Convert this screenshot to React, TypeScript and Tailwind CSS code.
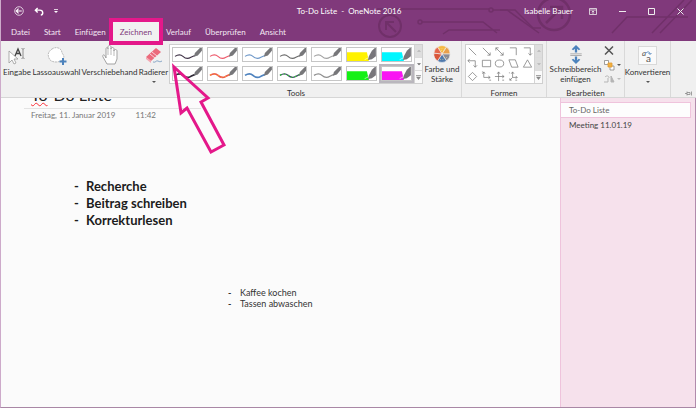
import { useState } from "react"
import type { ReactNode } from "react"
import clsx from "clsx"

const tabs = ["Datei", "Start", "Einfügen", "Zeichnen", "Verlauf", "Überprüfen", "Ansicht"]

interface Pen {
  label: string
  color: string
  width?: number
  marker?: boolean
  glitter?: string
}

const pens: Pen[] = [
  { label: "Stift schwarz", color: "#3f3347" },
  { label: "Stift rot", color: "#ee5a6c" },
  { label: "Stift blau", color: "#6d97c8" },
  { label: "Stift dunkelgrau", color: "#6b6b6b" },
  { label: "Stift grau", color: "#a2a2a2" },
  { label: "Textmarker gelb", color: "#fff200", marker: true },
  { label: "Textmarker türkis", color: "#00f6ff", marker: true },
  { label: "Stift schwarz dick", color: "#2e2936", width: 1.7 },
  { label: "Stift rot dick", color: "#ed5a50", width: 1.7, glitter: "#f79a3c" },
  { label: "Stift blau dick", color: "#4f83bf", width: 1.7 },
  { label: "Stift Galaxie", color: "#44506b", width: 1.5, glitter: "#2fd02f" },
  { label: "Stift grau dick", color: "#8e8e8e", width: 1.4 },
  { label: "Textmarker grün", color: "#15f015", marker: true },
  { label: "Textmarker magenta", color: "#f914f3", marker: true },
]

const shapes: { label: string; draw: ReactNode }[] = [
  { label: "Linie", draw: <path d="M2 2l8 8" /> },
  { label: "Pfeil", draw: <path d="M2 2l8 8M10 7v3H7" /> },
  { label: "Doppelpfeil", draw: <path d="M2 2l8 8M10 7v3H7M2 5V2h3" /> },
  { label: "Winkel", draw: <path d="M2 2h7v8" /> },
  { label: "Winkelpfeil", draw: <path d="M2 2h7v8M7 8l2 2 2-2" /> },
  { label: "Winkel-Doppelpfeil", draw: <path d="M1 3h8v7M7 8l2 2 2-2M3 1L1 3l2 2" /> },
  { label: "Rechteck", draw: <path d="M1.500 2.500h9v7h-9z" /> },
  { label: "Ellipse", draw: <ellipse cx="6" cy="6" rx="4.6" ry="3.8" /> },
  { label: "Parallelogramm", draw: <path d="M1 2h7l3 8H4z" /> },
  { label: "Dreieck", draw: <path d="M6 2l4.500 8h-9z" /> },
  { label: "Raute", draw: <path d="M6 1.500L10.500 6 6 10.500 1.500 6z" /> },
  { label: "Koordinatensystem", draw: <path d="M3 1v6h7M1.500 3L3 1l1.500 2M8 5.500L10 7 8 8.500M1 1h1M9 10h2" /> },
  { label: "Achsenkreuz", draw: <path d="M5 1v10M1 6h10M3.500 3L5 1l1.500 2M9 4.500L11 6 9 7.500M9 10h2" /> },
  { label: "3D-Achsen", draw: <path d="M5 1v6h5M5 7l-3 3M3.500 3L5 1l1.500 2M8.500 5.500L10 7 8.500 8.500M2 8v2h2M1 2h1M8 10h2" /> },
]

function PenIcon({ pen }: { pen: Pen }) {
  return (
    <svg viewBox="0 0 29 14" className="block h-full w-full" preserveAspectRatio="none">
      {pen.marker ? (
        <>
          <path d="M0 4.500h20l2 9.500H0z" fill={pen.color} />
          <path d="M18 13l1-2 1 1 1-2 1 2 2-1" stroke="#fff" strokeWidth=".8" strokeDasharray="1 1" fill="none" />
          <path d="M28 0h1v9l-4 3-4 1 1-4 3-6z" fill="#77757a" />
        </>
      ) : (
        <>
          <path d="M2 9c3-2 6-2 8 0s5 3 8 1l4-2" stroke={pen.color} strokeWidth={pen.width ?? 1.1} fill="none" />
          {pen.glitter && (
            <path d="M2 9c3-2 6-2 8 0s5 3 8 1l4-2" stroke={pen.glitter} strokeWidth="1.200" strokeDasharray="1.500 2.500" fill="none" />
          )}
          <path d="M27 0h2v3l-4 5-4 1.500 1-4z" fill="#77777a" />
        </>
      )}
    </svg>
  )
}

function Scroller({ mutedDown = false }: { mutedDown?: boolean }) {
  return (
    <div className="flex w-2 flex-col border-l border-[#d4d4d4] text-[#777]">
      <button aria-label="Nach oben" className="flex flex-1 items-center justify-center bg-[#dedede]">
        <svg viewBox="0 0 6 6" className="h-1 w-1" fill="#b5b5b5"><path d="M0 4l3-3 3 3z" /></svg>
      </button>
      <button
        aria-label="Nach unten"
        className={clsx("flex flex-1 items-center justify-center border-y border-[#dcdcdc]", mutedDown ? "bg-[#dedede]" : "bg-[#fafafa]")}
      >
        <svg viewBox="0 0 6 6" className="h-1 w-1" fill={mutedDown ? "#b5b5b5" : "#666"}><path d="M0 2h6L3 5z" /></svg>
      </button>
      <button aria-label="Mehr" className="flex flex-1 items-center justify-center bg-[#fafafa]">
        <svg viewBox="0 0 6 6" className="h-[5px] w-[5px]" fill="#888"><path d="M0 0h6v1H0zM0 2h6L3 6z" /></svg>
      </button>
    </div>
  )
}

function RibbonButton({ label, icon, arrow, className }: { label: ReactNode; icon: ReactNode; arrow?: boolean; className?: string }) {
  return (
    <button className={clsx("flex flex-col items-center whitespace-nowrap text-[8px] leading-[10px] text-[#333]", className)}>
      <span className="flex h-[23px] items-center justify-center">{icon}</span>
      <span>{label}</span>
      {arrow && <Caret />}
    </button>
  )
}

function Caret() {
  return <svg viewBox="0 0 4 2" className="mt-1 h-[2px] w-1" fill="#555"><path d="M0 0h4L2 2z" /></svg>
}

function Group({ label, children, className }: { label?: string; children: ReactNode; className?: string }) {
  return (
    <section className={clsx("flex flex-col pt-[3px]", className)}>
      <div className="flex h-10 shrink-0 justify-center">{children}</div>
      {label && <div className="pt-1 text-center text-[8px] leading-[10px] text-[#333]">{label}</div>}
    </section>
  )
}

function CircuitArt() {
  return (
    <svg className="absolute right-0 top-0 h-[41px] w-[320px]" viewBox="376 0 320 41" fill="none" stroke="#703069" strokeWidth="1.500">
      <circle cx="390" cy="26" r="11" strokeWidth="2" />
      <path d="M396 32l-9-9M386 30v-8h8" strokeWidth="2" />
      <path d="M377 9h112M493 10h22l18 18h8" />
      <circle cx="491" cy="10" r="2" />
      <circle cx="420" cy="22" r="2" />
      <path d="M422 22h61l14 11M443 34l6-4h51M500 10h7l32 23" />
      <circle cx="554" cy="14" r="16" strokeWidth="2.500" />
      <path d="M546 23l15-15M550 7h12v12" strokeWidth="2.500" />
      <path d="M612 33l15-16h61M652 33L684 0M660 33L692 0" />
    </svg>
  )
}

function Header({ active, onSelect }: { active: string; onSelect: (tab: string) => void }) {
  return (
    <header className="relative z-20 bg-[#80397b] text-white">
      <CircuitArt />
      <div className="relative flex h-[22px] items-center text-[8px]">
        <div className="flex flex-1 items-center gap-3 pl-[13px]">
          <button aria-label="Zurück">
            <svg viewBox="0 0 11 11" className="h-[10px] w-[10px]" fill="none" stroke="#fff">
              <circle cx="5.500" cy="5.500" r="4.700" strokeWidth=".8" />
              <path d="M8.500 5.500h-6M5 3L2.500 5.500 5 8" strokeWidth="1.200" />
            </svg>
          </button>
          <button aria-label="Rückgängig" className="-ml-1 px-[2px]">
            <svg viewBox="0 0 11 10" className="h-[9px] w-[10px]" fill="none" stroke="#fff" strokeWidth="1.600">
              <path d="M4 1L1.500 3.500 4 6M2 3.500h4.500c4 0 4 5 1 5.500" />
            </svg>
          </button>
          <button aria-label="Symbolleiste anpassen" className="-ml-1">
            <svg viewBox="0 0 4 4" className="h-1 w-1" fill="#fff"><path d="M0 0h4v.8H0zM0 2h4L2 4z" /></svg>
          </button>
        </div>
        <h1 className="whitespace-nowrap">To-Do Liste&nbsp; -&nbsp; OneNote 2016</h1>
        <div className="flex flex-1 items-center justify-end pr-3">
          <span className="mr-4 whitespace-nowrap">Isabelle Bauer</span>
          <div className="flex items-center gap-[22px]">
            <button aria-label="Menüband-Optionen">
              <svg viewBox="0 0 8 7" className="h-[7px] w-2" fill="none" stroke="#eee" strokeWidth=".8">
                <path d="M.5.5h7v6h-7zM.5 2h7M4 6V3M2.800 4.200L4 3l1.200 1.200" />
              </svg>
            </button>
            <button aria-label="Minimieren">
              <svg viewBox="0 0 7 7" className="h-[7px] w-[7px]" stroke="#eee"><path d="M0 3.500h7" /></svg>
            </button>
            <button aria-label="Maximieren">
              <svg viewBox="0 0 7 7" className="h-[7px] w-[7px]" fill="none" stroke="#eee"><path d="M.5.5h6v6h-6z" /></svg>
            </button>
            <button aria-label="Schließen">
              <svg viewBox="0 0 7 7" className="h-[7px] w-[7px]" stroke="#eee"><path d="M.5.5l6 6M6.500.5l-6 6" /></svg>
            </button>
          </div>
        </div>
      </div>
      <nav className="relative flex h-[19px] items-stretch pl-[3px] text-[8px]">
        {tabs.map((tab) => (
          <button
            key={tab}
            onClick={() => onSelect(tab)}
            className={clsx(
              "relative px-[7px]",
              tab === active ? "bg-[#f1f1f1] text-[#80397b]" : "text-[#f3e8f2]"
            )}
          >
            {tab}
            {tab === "Zeichnen" && (
              <span className="pointer-events-none absolute -inset-x-1 -bottom-1 -top-1 z-10 border-4 border-[#e4188a]" />
            )}
          </button>
        ))}
      </nav>
    </header>
  )
}

function Ribbon() {
  const [selected, setSelected] = useState("Textmarker magenta")

  return (
    <div className="relative z-10 flex h-[57px] border-b border-[#d6d6d6] bg-[#f0f0f0]">
      <Group className="pl-[1px]">
        <RibbonButton
          className="w-[30px]"
          label="Eingabe"
          icon={
            <svg viewBox="0 0 18 18" className="h-[18px] w-[18px]">
              <path d="M1 4v12l3-3 2 4 2-1-2-4h4z" fill="#fff" stroke="#999" strokeWidth=".8" />
              <path d="M7 9l3-7 3 7M8 6.500h4" fill="none" stroke="#444" strokeWidth="1.300" />
              <path d="M13.500 1.500c1 0 1 .5 1.500.5s.5-.5 1.500-.5M15 2v9M13.500 11.500c1 0 1-.5 1.500-.5s.5.5 1.500.5" fill="none" stroke="#777" strokeWidth=".8" />
            </svg>
          }
        />
        <RibbonButton
          className="w-[49px]"
          label="Lassoauswahl"
          icon={
            <svg viewBox="0 0 20 20" className="h-5 w-5">
              <path d="M5 3c4-3 10-1 10 4 3 3 2 7-1 8-5 2-11 1-12-3C0 8 2 5 5 3z" fill="#fff" stroke="#aaa" strokeWidth=".8" strokeDasharray="2 .7" />
              <path d="M16 12v7M12.500 15.500h7" stroke="#4c82bc" strokeWidth="2" />
            </svg>
          }
        />
        <RibbonButton
          className="w-[57px]"
          label="Verschiebehand"
          icon={
            <svg viewBox="0 0 16 21" className="h-[21px] w-4">
              <path d="M5 19L1 12c-1-2 1-3 2-1l1 2V4c0-2 2-2 2 0V2c0-2 3-2 3 0v2c0-2 3-2 3 0v2c0-2 3-2 3 0v8l-2 5z" fill="#fff" stroke="#999" strokeWidth=".9" />
              <path d="M6 4v6M9 3v7M12 5v6" stroke="#aaa" strokeWidth=".8" />
            </svg>
          }
        />
        <RibbonButton
          className="w-[31px]"
          label="Radierer"
          arrow
          icon={
            <svg viewBox="0 0 18 17" className="h-[17px] w-[18px]">
              <path d="M1 10L11 1l5 4L6 14z" fill="#eb6a7c" />
              <path d="M1 10l5 4v2l-5-4z" fill="#f4a5b0" />
              <path d="M5 7l5 4M7 5l5 4" stroke="#fbdde1" strokeWidth=".9" />
              <path d="M8 15c3 1 3-2 5-1s2 1 4 0" fill="none" stroke="#6f94bd" strokeWidth=".8" />
            </svg>
          }
        />
      </Group>

      <Group label="Tools" className="w-[254px]">
        <div className="flex w-full border border-[#cfcfcf] bg-white">
          <div className="grid flex-1 grid-cols-7 grid-rows-2 gap-x-1 gap-y-1 px-[2px] py-[2px]">
            {pens.map((pen) => (
              <button
                key={pen.label}
                aria-label={pen.label}
                onClick={() => setSelected(pen.label)}
                className={clsx(
                  "h-[15px] border border-[#c6c6c6] bg-white",
                  selected === pen.label && "outline-2 outline-[#b9b6bd]"
                )}
              >
                <PenIcon pen={pen} />
              </button>
            ))}
          </div>
          <Scroller />
        </div>
      </Group>

      <Group className="w-[39px] border-r border-[#d9d9d9]">
        <RibbonButton
          label={<>Farbe und<br />Stärke</>}
          icon={
            <svg viewBox="0 0 20 20" className="h-[18px] w-[18px]" stroke="#f0f0f0" strokeWidth=".7">
              <path d="M10 10L5 2.300A9 9 0 0 1 15 2.300z" fill="#f5b942" />
              <path d="M10 10L15 2.300A9 9 0 0 1 19 10z" fill="#e9a04c" />
              <path d="M10 10h9a9 9 0 0 1-4 7.700z" fill="#8b8b94" />
              <path d="M10 10l5 7.700a9 9 0 0 1-10 0z" fill="#4f79ad" />
              <path d="M10 10l-5 7.700A9 9 0 0 1 1 9z" fill="#d9573b" />
              <path d="M10 10L1 9a9 9 0 0 1 4-6.700z" fill="#e4674a" />
              <path d="M7 4h6M9 6h5M12 14h4M8 16h5" stroke="#f7e8a0" strokeDasharray="1 1.500" />
            </svg>
          }
        />
      </Group>

      <Group label="Formen" className="w-[85px] border-r border-[#d9d9d9] px-[3px]">
        <div className="flex w-full border border-[#cfcfcf] bg-white">
          <div className="grid flex-1 grid-cols-5 grid-rows-3 place-items-center">
            {shapes.map((shape) => (
              <button key={shape.label} aria-label={shape.label}>
                <svg viewBox="0 0 12 12" className="block h-[11px] w-[11px]" fill="none" stroke="#777" strokeWidth=".8">
                  {shape.draw}
                </svg>
              </button>
            ))}
          </div>
          <Scroller mutedDown />
        </div>
      </Group>

      <Group label="Bearbeiten" className="w-[78px] border-r border-[#d9d9d9]">
        <RibbonButton
          className="flex-1"
          label={<>Schreibbereich<br />einfügen</>}
          icon={
            <svg viewBox="0 0 12 20" className="h-[19px] w-3" fill="#4c82bc">
              <path d="M6 0l4.500 4.500-1.500 1L7.200 4v4H4.800V4L3 5.500l-1.500-1zM6 20l4.500-4.500-1.500-1L7.200 16v-4H4.800v4L3 14.500l-1.500 1z" />
              <path d="M0 9h12v.8H0zM0 10.800h12v.8H0z" fill="#999" />
            </svg>
          }
        />
        <div className="flex w-[20px] flex-col justify-between pb-[1px] pt-[2px]">
          <button aria-label="Löschen">
            <svg viewBox="0 0 10 9" className="h-[9px] w-[10px]" stroke="#555" strokeWidth="1.500"><path d="M1 .5l8 8M9 .5l-8 8" /></svg>
          </button>
          <button aria-label="Anordnen" className="flex items-center gap-[2px]">
            <svg viewBox="0 0 11 11" className="h-[11px] w-[11px]" fill="#fff" stroke="#888" strokeWidth=".8">
              <path d="M.5.5h4v4h-4zM6 6h4v4H6z" />
              <path d="M4 3h4v4H4z" fill="#f3b13e" stroke="#e09b32" />
            </svg>
            <svg viewBox="0 0 4 2" className="h-[2px] w-1" fill="#555"><path d="M0 0h4L2 2z" /></svg>
          </button>
          <button aria-label="Drehen" className="flex items-center gap-[2px]">
            <svg viewBox="0 0 11 8" className="h-2 w-[11px]" fill="none" stroke="#b5b5b5">
              <path d="M0 7h4V3M1 2c2-2 4-1 4 1" />
              <path d="M7 1v6h3z" fill="#b5b5b5" />
            </svg>
            <svg viewBox="0 0 4 2" className="h-[2px] w-1" fill="#bbb"><path d="M0 0h4L2 2z" /></svg>
          </button>
        </div>
      </Group>

      <Group className="w-[46px] border-r border-[#d9d9d9]">
        <RibbonButton
          label="Konvertieren"
          arrow
          icon={
            <span className="relative flex h-[19px] w-[19px] border border-[#d9d9d9] bg-[#fafafa] text-[#555]">
              <span className="pl-[3px] text-[8px] italic leading-[12px]">a</span>
              <span className="pt-[5px] text-[10px] leading-[12px]">a</span>
              <svg viewBox="0 0 6 4" className="absolute right-1 top-1 h-1 w-[6px]" fill="none" stroke="#4c82bc" strokeWidth=".9">
                <path d="M0 2c2-2 4-1 4 1M2.500 2L4 3.500 5.500 2" />
              </svg>
            </span>
          }
        />
      </Group>

      <div className="flex flex-1 items-end justify-end pb-[1px] pr-1">
        <button aria-label="Menüband anheften">
          <svg viewBox="0 0 7 5" className="block h-[5px] w-[7px]" fill="none" stroke="#888" strokeWidth=".8">
            <path d="M0 2.500h2M2 .5v4M2 1.500h3v2H2M6.500.5v4" />
          </svg>
        </button>
      </div>
    </div>
  )
}

function Note({ items, className }: { items: string[]; className?: string }) {
  return (
    <ul className={className}>
      {items.map((item) => (
        <li key={item} className="flex">
          <span className="w-3 shrink-0 font-bold">-</span>
          {item}
        </li>
      ))}
    </ul>
  )
}

export default function App() {
  const [tab, setTab] = useState("Zeichnen")

  return (
    <div
      className="relative flex min-h-screen flex-col border-b border-l border-b-[#a987a5] border-l-[#cdaaca] bg-[#fbfbfb]"
      style={{ fontFamily: 'Lato, "Noto Sans", sans-serif' }}
    >
      <Header active={tab} onSelect={setTab} />
      <Ribbon />

      <div className="flex flex-1">
        <main className="flex-1">
          {/* Seitentitel, halb unter das Menüband gescrollt */}
          <div className="-mt-[13px] ml-[23px] w-[177px] border-b border-[#e3e3e3] pb-[3px] pl-[7px] text-[16px] leading-5 text-[#222]">
            <span className="underline decoration-red-500 decoration-wavy decoration-1 underline-offset-1">To</span>-Do Liste
          </div>
          <div className="flex gap-5 pl-[30px] text-[8px] leading-3 text-[#777]">
            <span>Freitag, 11. Januar 2019</span>
            <span>11:42</span>
          </div>
          <Note
            className="ml-[73px] mt-[57px] text-[13px] font-bold leading-[17px] text-[#1c1c1c]"
            items={["Recherche", "Beitrag schreiben", "Korrekturlesen"]}
          />
          <Note
            className="ml-[227px] mt-[58px] text-[9px] leading-[11px] text-[#333]"
            items={["Kaffee kochen", "Tassen abwaschen"]}
          />
        </main>

        <aside className="flex w-[136px] flex-col border-l border-r border-l-[#efc3dc] border-r-[#b18bac] bg-[#f6e1ec] pt-1 text-[8px]">
          <a href="#todo" className="mr-1 border border-l-0 border-[#efc3dc] bg-[#fdfdfd] pl-2 leading-[14px] text-[#666]">To-Do Liste</a>
          <a href="#meeting" className="pl-2 leading-[14px] text-[#444]">Meeting 11.01.19</a>
        </aside>
      </div>

      {/* Zeiger auf die Werkzeuggalerie */}
      <svg className="pointer-events-none absolute left-[170px] top-[62px] z-30 h-[94px] w-[58px]" viewBox="171 62 58 94" fill="none" stroke="#e4188a" strokeWidth="3">
        <path d="M174 67L208 98l-7 4 23 43-13 7-24-44-6 5z" />
      </svg>
    </div>
  )
}
